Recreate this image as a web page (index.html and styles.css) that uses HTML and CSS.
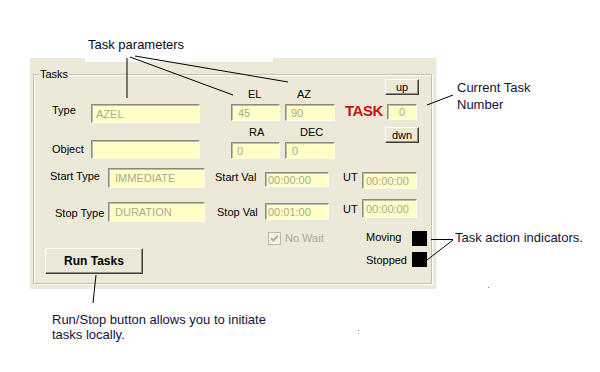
FILE: index.html
```html
<!DOCTYPE html>
<html>
<head>
<meta charset="utf-8">
<link rel="stylesheet" href="styles.css">
</head>
<body>
<div class="page">
  <div class="note note-top">Task parameters</div>
  <div class="main">
    <div class="panel">
      <div class="group">
        <span class="legend">Tasks</span>
        <div class="top-area">
          <div class="col-left">
            <div class="frow frow-type">
              <span class="lbl lbl-w39">Type</span>
              <div class="inp inp-wide pl4">AZEL</div>
            </div>
            <div class="frow frow-obj">
              <span class="lbl lbl-w39 mt3">Object</span>
              <div class="inp inp-wide"></div>
            </div>
          </div>
          <div class="col-mid">
            <div class="lblrow lblrow-1"><span class="cell-a pl17">EL</span><span class="cell-b pl12">AZ</span></div>
            <div class="inprow"><div class="inp inp-a pl6">45</div><div class="inp inp-b pl5">90</div></div>
            <div class="lblrow lblrow-2"><span class="cell-a pl18">RA</span><span class="cell-b pl15">DEC</span></div>
            <div class="inprow"><div class="inp inp-a pl5">0</div><div class="inp inp-b pl6">0</div></div>
          </div>
          <div class="col-right">
            <div class="btn btn-small btn-up">up</div>
            <div class="taskrow">
              <span class="task-label">TASK</span>
              <div class="inp inp-num">0</div>
            </div>
            <div class="btn btn-small btn-dwn">dwn</div>
          </div>
        </div>
        <div class="row row-start">
          <span class="lbl cell-type pl16 mt2">Start Type</span>
          <div class="inp inp-type pl6">IMMEDIATE</div>
          <span class="lbl cell-val pl10 mt3">Start Val</span>
          <div class="inp inp-val h15 mt4 pl2">00:00:00</div>
          <span class="lbl cell-ut pl14 mt3">UT</span>
          <div class="inp inp-ut h17 mt4 pl3">00:00:00</div>
        </div>
        <div class="row row-stop">
          <span class="lbl cell-type pl21 mt8">Stop Type</span>
          <div class="inp inp-type pl6 mt3">DURATION</div>
          <span class="lbl cell-val pl12 mt7">Stop Val</span>
          <div class="inp inp-val h17 mt4 pl2">00:01:00</div>
          <span class="lbl cell-ut pl14 mt4">UT</span>
          <div class="inp inp-ut h19 pl3">00:00:00</div>
        </div>
        <div class="bottom">
          <div class="btn btn-run">Run Tasks</div>
          <div class="nowait">
            <svg class="chk" width="13" height="13" viewBox="0 0 13 13"><rect x="0.5" y="0.5" width="12" height="12" fill="#f3f1e8" stroke="#bcb9aa"/><path d="M3 6.2 L5.3 8.6 L10 3.8" fill="none" stroke="#b3b0a0" stroke-width="2"/></svg>
            <span class="nowait-text">No Wait</span>
          </div>
          <div class="indicators">
            <div class="ind ind-1"><span class="lbl ind-lbl">Moving</span><span class="ind-box"></span></div>
            <div class="ind ind-2"><span class="lbl ind-lbl mt2">Stopped</span><span class="ind-box"></span></div>
          </div>
        </div>
      </div>
    </div>
    <div class="notes-right">
      <div class="note note-current">Current Task<br>Number</div>
      <div class="note note-action">Task action indicators.</div>
    </div>
  </div>
  <div class="note note-bottom">Run/Stop button allows you to initiate<br>tasks locally.</div>
  <svg class="callouts" width="600" height="372" viewBox="0 0 600 372">
    <rect x="85" y="57" width="188" height="5" fill="#ffffff"/>
    <g stroke="#000" stroke-width="1" fill="none">
      <line x1="127" y1="58" x2="127" y2="98"/>
      <line x1="130" y1="57" x2="233" y2="95"/>
      <line x1="135" y1="56" x2="288" y2="82"/>
      <line x1="453" y1="95" x2="427" y2="105"/>
      <line x1="431" y1="239.5" x2="453" y2="239.5"/>
      <line x1="427" y1="260" x2="453" y2="240"/>
      <line x1="96" y1="275" x2="93" y2="303"/>
    </g>
    <rect x="488" y="287" width="1" height="1" fill="#777"/>
    <rect x="358" y="330" width="1" height="1" fill="#777"/>
  </svg>
</div>
</body>
</html>
```

FILE: styles.css
```css
html, body {
  margin: 0;
  padding: 0;
  background: #ffffff;
}

.page {
  position: relative;
  width: 600px;
  height: 372px;
  overflow: hidden;
  font-family: "Liberation Sans", Arial, sans-serif;
}

.note {
  font-size: 13px;
  color: #14123c;
  white-space: nowrap;
}

.note-top {
  margin-left: 88px;
  padding-top: 37px;
  height: 16px;
  line-height: 16px;
  color: #08081c;
}

.main {
  display: flex;
  margin-top: 5px;
  margin-left: 30px;
}

.panel {
  width: 407px;
  height: 231px;
  background: #ece9d8;
  border-right: 1px solid #f6f5ee;
  padding: 16px 0 0 3px;
  box-sizing: border-box;
}

.group {
  position: relative;
  box-sizing: border-box;
  width: 399px;
  height: 210px;
  border: 1px solid #c3c0b0;
  box-shadow: inset 1px 1px 0 #ffffff, 1px 1px 0 #ffffff;
  font-size: 11px;
}

.legend {
  position: absolute;
  left: 5px;
  top: -7px;
  padding: 0 1px;
  line-height: 13px;
  background: #ece9d8;
  color: #000;
}

.lbl {
  display: block;
  line-height: 13px;
  color: #000;
  white-space: nowrap;
  box-sizing: border-box;
}

.inp {
  display: flex;
  align-items: center;
  box-sizing: border-box;
  background: #ffffc6;
  border: 1px solid;
  border-color: #8d8b7f #fbfbf2 #fbfbf2 #8d8b7f;
  box-shadow: inset 1px 1px 0 #bdbaac;
  color: #aca899;
  font-size: 11px;
  white-space: nowrap;
  overflow: hidden;
}

.btn {
  display: flex;
  align-items: center;
  justify-content: center;
  box-sizing: border-box;
  background: #ece9d8;
  border: 1px solid;
  border-color: #ffffff #404040 #404040 #ffffff;
  box-shadow: inset -1px -1px 0 #8d8b7f;
  color: #000;
}

/* top area */
.top-area {
  display: flex;
  height: 86px;
}

.col-left {
  width: 197px;
  padding-left: 18px;
  box-sizing: border-box;
  display: flex;
  flex-direction: column;
}

.frow {
  display: flex;
  align-items: flex-start;
}

.frow-type { margin-top: 29px; }
.frow-obj { margin-top: 17px; }

.lbl-w39 { width: 39px; }

.inp-wide {
  width: 109px;
  height: 19px;
}

.col-mid {
  width: 104px;
  display: flex;
  flex-direction: column;
}

.lblrow {
  display: flex;
  height: 13px;
  line-height: 13px;
  color: #000;
}

.lblrow-1 { margin-top: 13px; }
.lblrow-2 { margin-top: 5px; }

.cell-a { width: 49px; box-sizing: border-box; }
.cell-b { width: 50px; margin-left: 5px; box-sizing: border-box; }

.inprow {
  display: flex;
  gap: 5px;
  margin-top: 3px;
}

.inp-a { width: 49px; height: 17px; }
.inp-b { width: 50px; height: 17px; }

.col-right {
  margin-left: 10px;
  width: 74px;
  display: flex;
  flex-direction: column;
}

.btn-small {
  width: 34px;
  height: 16px;
  margin-left: 40px;
  font-size: 11px;
}

.btn-up { margin-top: 4px; }
.btn-dwn { margin-top: 7px; }

.taskrow {
  display: flex;
  align-items: flex-start;
  margin-top: 8px;
  height: 17px;
}

.task-label {
  width: 42px;
  font-size: 15px;
  font-weight: bold;
  line-height: 16px;
  letter-spacing: -0.5px;
  color: #cc1111;
}

.inp-num {
  width: 30px;
  height: 16px;
  margin-top: 1px;
  justify-content: center;
}

/* start / stop rows */
.row {
  display: flex;
  align-items: flex-start;
}

.row-start { margin-top: 7px; height: 21px; }
.row-stop { margin-top: 10px; height: 23px; }

.cell-type { width: 74px; }
.cell-val { width: 60px; }
.cell-ut { width: 33px; }

.inp-type { width: 97px; height: 20px; }
.inp-val { width: 64px; }
.inp-ut { width: 55px; }

.h15 { height: 15px; }
.h17 { height: 17px; }
.h19 { height: 19px; }

/* bottom */
.bottom {
  display: flex;
  align-items: flex-start;
  height: 61px;
}

.btn-run {
  width: 98px;
  height: 26px;
  margin-left: 11px;
  margin-top: 26px;
  font-size: 12px;
  font-weight: bold;
}

.nowait {
  display: flex;
  align-items: center;
  gap: 4px;
  margin-left: 125px;
  margin-top: 10px;
}

.chk { display: block; }

.nowait-text {
  color: #aca899;
  line-height: 13px;
}

.indicators {
  margin-left: auto;
  margin-right: 4px;
  display: flex;
  flex-direction: column;
}

.ind {
  display: flex;
  align-items: flex-start;
}

.ind-1 { margin-top: 9px; }
.ind-2 { margin-top: 6px; }

.ind-lbl { width: 46px; }

.ind-box {
  display: block;
  width: 15px;
  height: 15px;
  background: #000;
}

/* right notes */
.notes-right {
  margin-left: 20px;
  display: flex;
  flex-direction: column;
}

.note-current {
  margin-top: 21px;
  line-height: 17px;
}

.note-action {
  margin-top: 116px;
  margin-left: -2px;
  line-height: 17px;
}

.note-bottom {
  margin-left: 52px;
  margin-top: 23px;
  line-height: 15px;
}

.callouts {
  position: absolute;
  left: 0;
  top: 0;
  pointer-events: none;
}

/* spacing helpers */
.pl2 { padding-left: 2px; }
.pl3 { padding-left: 3px; }
.pl4 { padding-left: 4px; }
.pl5 { padding-left: 5px; }
.pl6 { padding-left: 6px; }
.pl10 { padding-left: 10px; }
.pl12 { padding-left: 12px; }
.pl14 { padding-left: 14px; }
.pl15 { padding-left: 15px; }
.pl16 { padding-left: 16px; }
.pl17 { padding-left: 17px; }
.pl18 { padding-left: 18px; }
.pl21 { padding-left: 21px; }
.mt2 { margin-top: 2px; }
.mt3 { margin-top: 3px; }
.mt4 { margin-top: 4px; }
.mt7 { margin-top: 7px; }
.mt8 { margin-top: 8px; }
```
